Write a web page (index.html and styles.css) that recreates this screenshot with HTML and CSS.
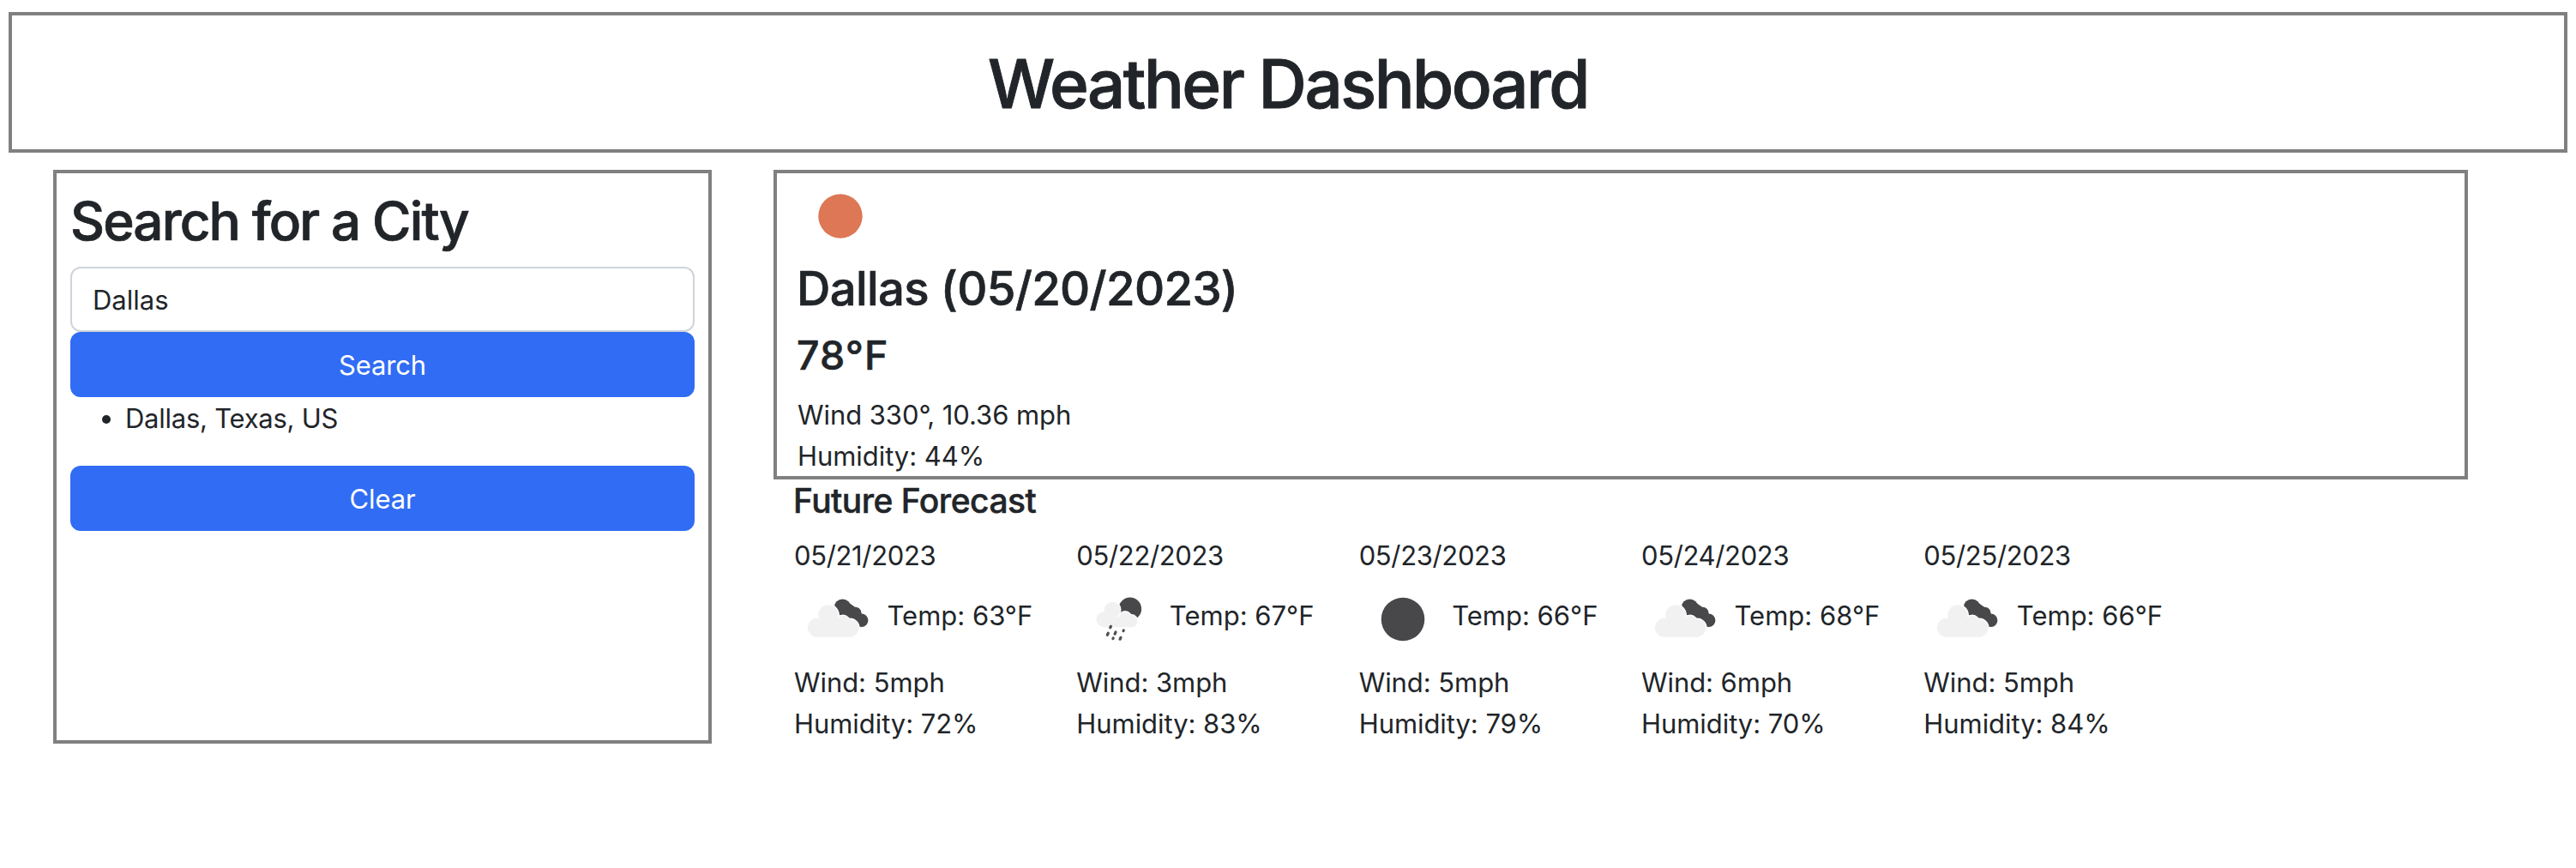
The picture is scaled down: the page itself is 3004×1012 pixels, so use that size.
FILE: index.html
```html
<!DOCTYPE html>
<html lang="en">
<head>
<meta charset="utf-8">
<title>Weather Dashboard</title>
<link rel="stylesheet" href="styles.css">
</head>
<body>
<svg class="sprite" aria-hidden="true">
  <symbol id="clear-day" viewBox="0 0 100 100">
    <circle cx="50" cy="50" r="25.7" fill="#dd7755"/>
  </symbol>
  <symbol id="clear-night" viewBox="0 0 100 100">
    <circle cx="51" cy="51" r="25.3" fill="#48484a"/>
  </symbol>
  <g id="broken-front">
    <circle cx="27" cy="60.700" r="11"/>
    <circle cx="40" cy="46" r="11.700"/>
    <circle cx="57" cy="54.600" r="7.800"/>
    <circle cx="65" cy="61.200" r="10.500"/>
    <path d="M27 53H65V71.700H27Z"/>
  </g>
  <g id="rain-front">
    <circle cx="32.500" cy="51.200" r="9"/>
    <circle cx="42" cy="40" r="9.300"/>
    <circle cx="57" cy="49.800" r="7.500"/>
    <circle cx="64.300" cy="53.200" r="7"/>
    <path d="M32.500 48H64.300V60.200H32.500Z"/>
  </g>
  <symbol id="broken-clouds" viewBox="0 0 100 100">
    <g fill="#48484a">
      <circle cx="56.5" cy="37.3" r="9.8"/>
      <circle cx="71.5" cy="43.7" r="7"/>
      <circle cx="78.7" cy="52.3" r="7.7"/>
      <path d="M47 35 60 29 77 41 84 57 76 60 60 52Z"/>
    </g>
    <use href="#broken-front" fill="#fff" stroke="#fff" stroke-width="2.400"/>
    <use href="#broken-front" fill="#f1f1f1"/>
  </symbol>
  <symbol id="rain" viewBox="0 0 100 100">
    <circle cx="62.800" cy="38.900" r="13.300" fill="#48484a"/>
    <use href="#rain-front" fill="#fff" stroke="#fff" stroke-width="2.400"/>
    <use href="#rain-front" fill="#f1f1f1"/>
    <g stroke="#505052" stroke-width="3.200" stroke-linecap="round">
      <path d="M40.400 59.300 39.700 60.700M37.300 67.200 36.300 69.300M46 66 45.100 68.200M55.300 64 55 64.600M43.200 73 42.900 73.600M52 72.300 51.100 74.200"/>
    </g>
  </symbol>
</svg>

<header class="header"><h1>Weather Dashboard</h1></header>

<main class="main">
  <section class="search">
    <h2>Search for a City</h2>
    <input class="control" type="text" value="Dallas">
    <button class="btn" type="button">Search</button>
    <ul class="history"><li>Dallas, Texas, US</li></ul>
    <button class="btn" type="button">Clear</button>
  </section>

  <div class="results">
    <section class="current">
      <svg class="icon"><use href="#clear-day"/></svg>
      <h3>Dallas (05/20/2023)</h3>
      <h4>78°F</h4>
      <p>Wind 330°, 10.36 mph</p>
      <p>Humidity: 44%</p>
    </section>
    <section class="future">
      <h5>Future Forecast</h5>
      <div class="days">
        <article class="day">
          <p class="date">05/21/2023</p>
          <div class="temp"><svg class="icon"><use href="#broken-clouds"/></svg><span>Temp: 63°F</span></div>
          <p>Wind: 5mph</p>
          <p>Humidity: 72%</p>
        </article>
        <article class="day">
          <p class="date">05/22/2023</p>
          <div class="temp"><svg class="icon"><use href="#rain"/></svg><span>Temp: 67°F</span></div>
          <p>Wind: 3mph</p>
          <p>Humidity: 83%</p>
        </article>
        <article class="day">
          <p class="date">05/23/2023</p>
          <div class="temp"><svg class="icon"><use href="#clear-night"/></svg><span>Temp: 66°F</span></div>
          <p>Wind: 5mph</p>
          <p>Humidity: 79%</p>
        </article>
        <article class="day">
          <p class="date">05/24/2023</p>
          <div class="temp"><svg class="icon"><use href="#broken-clouds"/></svg><span>Temp: 68°F</span></div>
          <p>Wind: 6mph</p>
          <p>Humidity: 70%</p>
        </article>
        <article class="day">
          <p class="date">05/25/2023</p>
          <div class="temp"><svg class="icon"><use href="#broken-clouds"/></svg><span>Temp: 66°F</span></div>
          <p>Wind: 5mph</p>
          <p>Humidity: 84%</p>
        </article>
      </div>
    </section>
  </div>
</main>
</body>
</html>
```
FILE: styles.css
```css
* { box-sizing: border-box; }

body {
  margin: 0;
  padding: 14px 10px 0;
  background: #fff;
  color: #212529;
  font: 400 31px/48px Inter, "Liberation Sans", sans-serif;
}

h1, h2, h3, h4, h5, p, ul { margin: 0; padding: 0; }
h1, h2, h3, h4, h5 { font-weight: 500; -webkit-text-stroke: .012em #212529; }
p, li { height: 48px; line-height: 50px; letter-spacing: -.06px; }

.sprite { display: none; }
.icon { display: block; flex: none; width: 100px; height: 100px; }

.header {
  height: 164px;
  border: 4px solid gray;
  padding-top: 32px;
  text-align: center;
}
h1 { font-size: 78px; line-height: 96px; letter-spacing: -2.5px; }

.main {
  display: flex;
  align-items: flex-start;
  gap: 72px;
  padding: 20px 116px 0 52px;
}

.search {
  display: flex;
  flex-direction: column;
  width: 768px;
  height: 669px;
  border: 4px solid gray;
  padding: 16px;
}
h2 {
  height: 77px;
  margin: 0 0 16px;
  font-size: 62px;
  line-height: 79px;
  letter-spacing: -1.86px;
}
.control, .btn {
  display: block;
  width: 728px;
  height: 76px;
  margin: 0;
  padding: 13px 24px 11px;
  border-radius: 12px;
  font: inherit;
}
.control { border: 2px solid #ced4da; padding: 12px 24px; background: #fff; color: #212529; outline: 0; }
.btn { border: 2px solid #316cf4; background: #316cf4; color: #fff; letter-spacing: -.15px; }

.history { margin-bottom: 32px; padding-left: 64px; list-style: none; }
.history li { position: relative; letter-spacing: -.25px; }
.history li::before {
  content: "";
  position: absolute;
  left: -27px;
  top: 21px;
  width: 10px;
  height: 10px;
  border-radius: 50%;
  background: #212529;
}

.results { flex: 1; }
.current { height: 361px; border: 4px solid gray; padding: 0 24px; }
h3 {
  height: 67px;
  margin: 0 0 16px -1px;
  font-size: 54.5px;
  line-height: 69px;
  letter-spacing: -.68px;
}
h4 { margin: 0 0 16px -1px; font-size: 46.5px; line-height: 58px; letter-spacing: 1.05px; }

.future { padding-left: 24px; }
h5 { height: 48px; margin: 0 0 16px -1px; font-size: 39px; line-height: 50px; letter-spacing: -.53px; }
.days { display: grid; grid-template-columns: repeat(5, 329.33px); }
.date { letter-spacing: -.35px; }
.temp { display: flex; align-items: center; gap: 8.5px; }
.temp span { padding-bottom: 7px; }
```
